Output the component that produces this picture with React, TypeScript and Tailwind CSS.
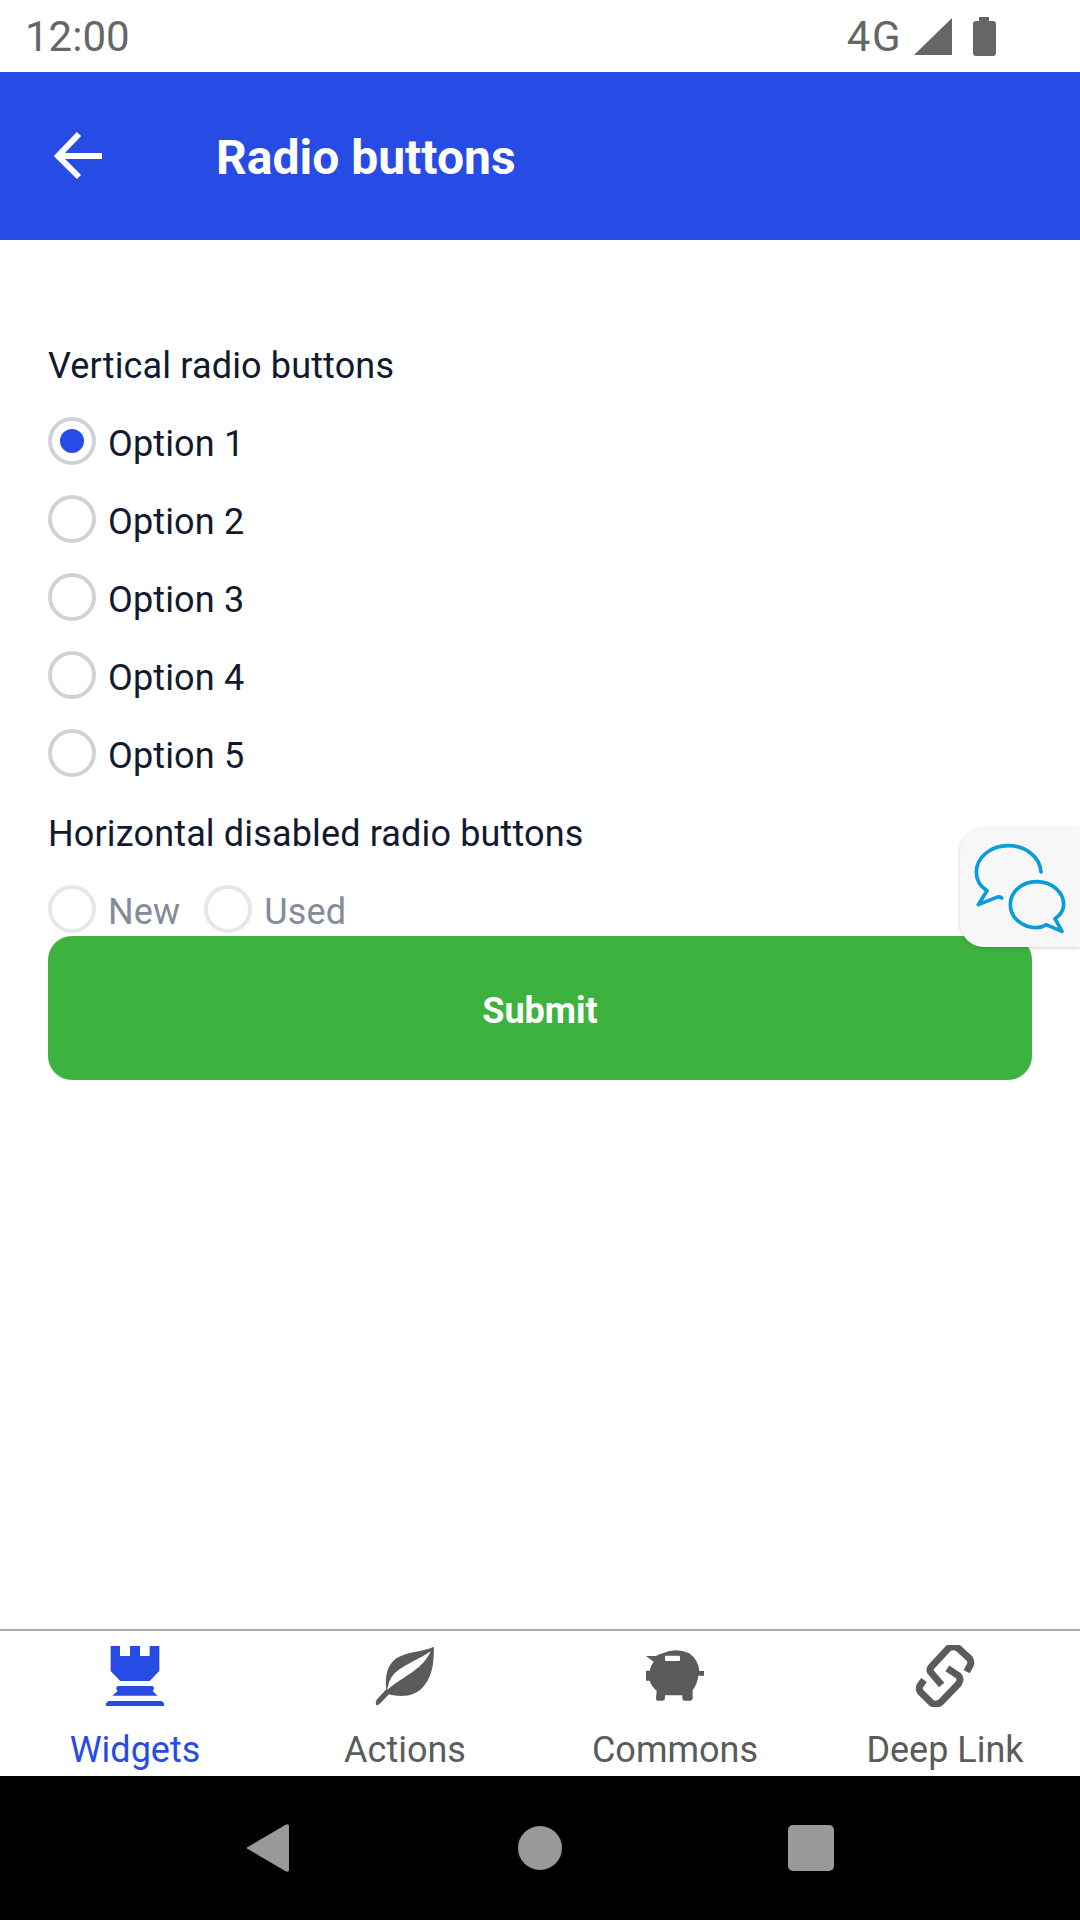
import React from "react";

const font = { fontFamily: "Roboto, sans-serif" };

function Radio({ label, checked, disabled }: { label: string; checked?: boolean; disabled?: boolean }) {
  return (
    <div className="flex h-[78px] items-center">
      <div className={`mb-[4px] flex h-[48px] w-[48px] items-center justify-center rounded-full border-4 ${disabled ? "border-[#e5e7eb]" : "border-[#d1d2d6]"}`}>
        {checked && <div className="h-[24px] w-[24px] rounded-full bg-[#274ce6]" />}
      </div>
      <span className={`ml-[12px] pt-[2px] text-[36px] leading-[48px] tracking-[0.15px] ${disabled ? "text-[#858b99]" : "text-[#111a2e]"}`}>{label}</span>
    </div>
  );
}

function Rook() {
  return (
    <svg className="h-[62px] w-[60px]" viewBox="302 105 180 186" fill="#274ce6">
      <path d="M319 108H347V138H377V108H407V138H436V108H465V183L436 213H348L319 183Z" />
      <path d="M340 228H445Q453 235 445 243L460 257H324L340 243Q331 235 340 228Z" />
      <path d="M305 288V280L312 273H472L479 280V288Z" />
    </svg>
  );
}
function Leaf() {
  return (
    <svg className="h-[62px] w-[60px]" viewBox="1086 105 180 186" fill="#5b5b5b">
      <path d="M1263 110C1230 125 1180 125 1150 145C1122 165 1115 200 1120 238L1092 268Q1086 278 1090 285Q1096 287 1102 280L1128 253C1160 262 1210 262 1235 225C1262 190 1262 150 1263 110Z" />
      <path fill="#fff" d="M1253 124C1225 145 1170 165 1145 190C1130 205 1125 225 1123 240C1160 205 1230 180 1253 124Z" />
    </svg>
  );
}
function Piggy() {
  return (
    <svg className="h-[62px] w-[60px]" viewBox="302 105 180 186" fill="#5b5b5b">
      <path d="M355 130Q395 112 435 130Q462 150 465 183H479V197H462Q458 225 445 240V265Q445 272 438 272H420Q414 272 414 265V256H362V265Q362 272 355 272H340Q334 272 335 265L337 242Q322 230 316 212H305V182H316Q320 165 328 155L305 138H335Q345 132 355 130Z" />
      <rect x="362" y="137" width="45" height="16" rx="4" fill="#fff" />
    </svg>
  );
}
function LinkIcon() {
  return (
    <svg className="h-[62px] w-[60px]" viewBox="75 28 180 186" fill="none" stroke="#5b5b5b" strokeWidth="21">
      <path d="M230 108L241 88Q245 78 238 68L205 38Q190 28 175 38L125 92Q115 103 125 113L155 148" />
      <path d="M102 133L90 150Q85 160 92 170L125 202Q138 210 152 200L205 145Q215 130 205 120L172 98" />
    </svg>
  );
}

function Tab({ label, active, icon }: { label: string; active?: boolean; icon: React.ReactNode }) {
  return (
    <div className="flex w-[270px] flex-col items-center pt-[14px]">
      {icon}
      <span className={`mt-[19px] text-[36px] leading-[48px] ${active ? "text-[#274ce6]" : "text-[#5b5b5b]"}`}>{label}</span>
    </div>
  );
}

export default function App() {
  return (
    <div className="relative flex h-[1920px] w-[1080px] flex-col overflow-hidden bg-white" style={font}>
      <div className="flex h-[72px] items-center justify-between pl-[25px] pr-[84px] text-[#666666]">
        <span className="pt-[2px] text-[42px] leading-[72px]">12:00</span>
        <div className="flex items-center">
          <span className="pt-[2px] text-[42px] leading-[72px] tracking-[1.5px]">4G</span>
          <svg className="ml-[12px] h-[37px] w-[38px]" viewBox="0 0 38 37" fill="#666666"><path d="M38 0V37H0Z" /></svg>
          <svg className="ml-[21px] h-[39px] w-[23px]" viewBox="0 0 23 39" fill="#666666"><path d="M6 0H16V4H20Q23 4 23 7V36Q23 39 20 39H3Q0 39 0 36V7Q0 4 3 4H6Z" /></svg>
        </div>
      </div>

      <div className="flex h-[168px] items-center bg-[#274ce6] pl-[54px]">
        <svg className="h-[50px] w-[50px]" viewBox="54 131 50 50" fill="none" stroke="#fff" strokeWidth="6"><path d="M102 156H58M79 134L58 156L79 177" /></svg>
        <span className="ml-[112px] pt-[4px] text-[48px] font-bold leading-[56px] text-white">Radio buttons</span>
      </div>

      <div className="flex flex-1 flex-col px-[48px] pt-[86px]">
        <div className="pt-[3px] text-[36px] leading-[75px] tracking-[0.15px] text-[#111a2e]">Vertical radio buttons</div>
        <Radio label="Option 1" checked />
        <Radio label="Option 2" />
        <Radio label="Option 3" />
        <Radio label="Option 4" />
        <Radio label="Option 5" />
        <div className="pt-[3px] text-[36px] leading-[75px] tracking-[0.15px] text-[#111a2e]">Horizontal disabled radio buttons</div>
        <div className="flex h-[78px] gap-[24px]">
          <Radio label="New" disabled />
          <Radio label="Used" disabled />
        </div>
        <div className="-mt-[14px] flex h-[144px] items-center justify-center rounded-[24px] bg-[#3eb23e] pt-[6px] text-[36px] font-bold text-white">Submit</div>
      </div>

      <div className="absolute left-[960px] top-[828px] flex h-[119px] w-[120px] items-center justify-center rounded-l-[24px] bg-[#f7f7f7] shadow-[0_1px_4px_rgba(0,0,0,0.18)]">
        <svg className="h-[92px] w-[94px]" viewBox="219 122 282 276" fill="none" stroke="#0a9bdc" strokeWidth="11" strokeLinejoin="round" strokeLinecap="round">
          <path d="M423 212C420 165 375 133 325 133C272 133 229 168 229 213C229 235 240 255 261 268L235 310L290 288Q298 285 305 290" />
          <path d="M410 241C365 241 331 272 331 310C331 348 365 379 410 379Q425 379 438 370L486 390L465 352C482 340 491 326 491 310C491 272 455 241 410 241Z" />
        </svg>
      </div>

      <div className="flex h-[147px] border-t-2 border-[#aaaaaa]">
        <Tab label="Widgets" active icon={<Rook />} />
        <Tab label="Actions" icon={<Leaf />} />
        <Tab label="Commons" icon={<Piggy />} />
        <Tab label="Deep Link" icon={<LinkIcon />} />
      </div>

      <div className="flex h-[144px] items-center bg-black pl-[245px]">
        <svg className="h-[50px] w-[44px]" viewBox="0 0 44 50" fill="#999999"><path d="M2 25L41 2Q44 1 44 4V46Q44 49 41 48Z" stroke="#999999" strokeWidth="1" strokeLinejoin="round" /></svg>
        <div className="ml-[229px] h-[44px] w-[44px] rounded-full bg-[#999999]" />
        <div className="ml-[226px] h-[46px] w-[46px] rounded-[5px] bg-[#999999]" />
      </div>
    </div>
  );
}
